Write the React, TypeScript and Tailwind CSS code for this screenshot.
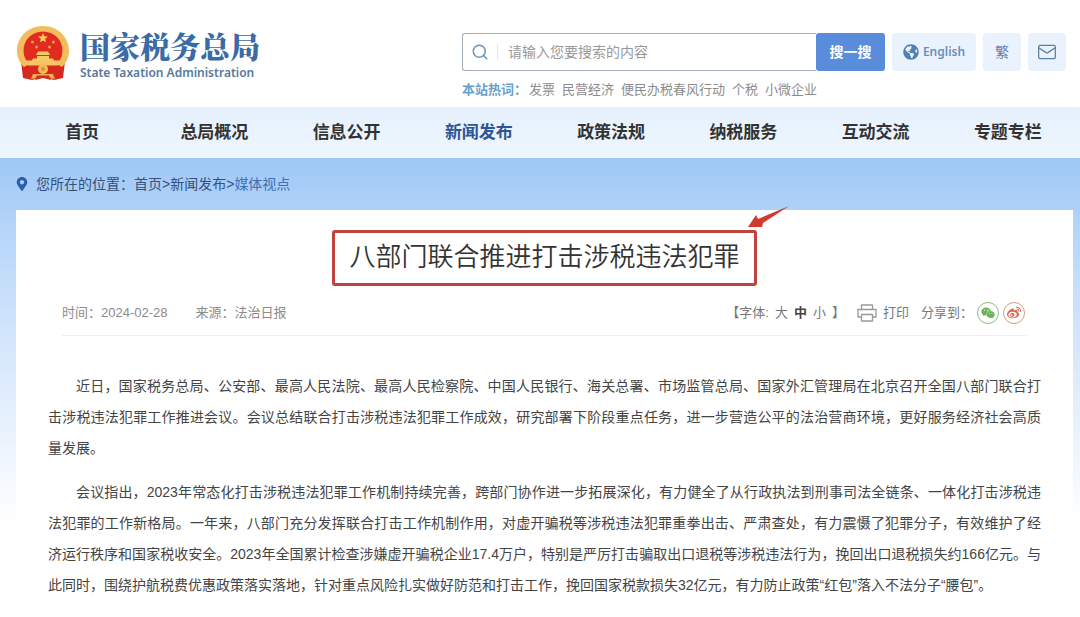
import type { ReactNode } from "react";
import { Mail, Search } from "lucide-react";
import { FaGlobeAmericas, FaMapMarkerAlt, FaWeibo, FaWeixin } from "react-icons/fa";

const navItems = ["首页", "总局概况", "信息公开", "新闻发布", "政策法规", "纳税服务", "互动交流", "专题专栏"];
const hotWords = ["发票", "民营经济", "便民办税春风行动", "个税", "小微企业"];

const paragraphs = [
  "近日，国家税务总局、公安部、最高人民法院、最高人民检察院、中国人民银行、海关总署、市场监管总局、国家外汇管理局在北京召开全国八部门联合打击涉税违法犯罪工作推进会议。会议总结联合打击涉税违法犯罪工作成效，研究部署下阶段重点任务，进一步营造公平的法治营商环境，更好服务经济社会高质量发展。",
  "会议指出，2023年常态化打击涉税违法犯罪工作机制持续完善，跨部门协作进一步拓展深化，有力健全了从行政执法到刑事司法全链条、一体化打击涉税违法犯罪的工作新格局。一年来，八部门充分发挥联合打击工作机制作用，对虚开骗税等涉税违法犯罪重拳出击、严肃查处，有力震慑了犯罪分子，有效维护了经济运行秩序和国家税收安全。2023年全国累计检查涉嫌虚开骗税企业17.4万户，特别是严厉打击骗取出口退税等涉税违法行为，挽回出口退税损失约166亿元。与此同时，围绕护航税费优惠政策落实落地，针对重点风险扎实做好防范和打击工作，挽回国家税款损失32亿元，有力防止政策“红包”落入不法分子“腰包”。",
];

function Emblem() {
  return (
    <svg viewBox="0 0 54 56" className="h-14 w-[54px] shrink-0" aria-hidden="true">
      <path d="M5 36L7 53l9 2 11-3 11 3 9-2 2-17z" fill="#d42a20" />
      <path d="M27 1C12 1 1 12 1 26c0 7 3 12 7 16l9-5h20l9 5c4-4 7-9 7-16C53 12 42 1 27 1z" fill="#f3bd5c" />
      <path d="M27 6.500C16 6.500 7.500 15 7.500 25.500c0 4 1.300 8 3.500 11h32c2.200-3 3.500-7 3.500-11C46.500 15 38 6.500 27 6.500z" fill="#e02c20" />
      <path d="M27 8l1.400 3.200 3.500.3-2.700 2.300.9 3.500L27 15.500l-3.100 1.800.9-3.500-2.700-2.300 3.500-.3z" fill="#f8cc58" />
      <g fill="#f29a48">
        <circle cx="16.500" cy="17" r="1.500" />
        <circle cx="20.500" cy="22" r="1.500" />
        <circle cx="33.500" cy="22" r="1.500" />
        <circle cx="37.500" cy="17" r="1.500" />
      </g>
      <path d="M22 26.500h10l2 3.500H20z M21 31h12v2.500h4l2 3.500H15l2-3.500h4z" fill="#f6cc66" />
      <path d="M8 35.500h38l-4 5H12z" fill="#f6c462" />
      <path d="M11 41q8 4 16 0 8 4 16 0l1 5q-8 4-12 1h-10q-4 3-12-1z" fill="#d9291f" />
      <circle cx="27" cy="44" r="5" fill="#f3bd5c" />
      <circle cx="27" cy="44" r="2" fill="#e58a35" />
      <path d="M17 49h20l2 5-12-2-12 2z" fill="#efae50" />
      <path d="M21 50.500l-2 4.500 8-2 8 2-2-4.500z" fill="#d42a20" />
    </svg>
  );
}

function PrinterIcon() {
  return (
    <svg viewBox="0 0 20 18" className="h-[18px] w-5" fill="none" stroke="#999" strokeWidth="1.300" strokeLinejoin="round" aria-hidden="true">
      <path d="M4.500 5.500V1h11v4.500" />
      <path d="M4.500 13H1V5.500h18V13h-3.500" />
      <path d="M4.500 10.500h11V17h-11z" />
    </svg>
  );
}

function ShareButton({ label, className, children }: { label: string; className: string; children: ReactNode }) {
  return (
    <button type="button" aria-label={label} className={`flex size-[22px] items-center justify-center rounded-full border ${className}`}>
      {children}
    </button>
  );
}

function Header() {
  return (
    <header className="flex h-[107px] items-start justify-between bg-white pr-3.5 pl-4">
      <a href="#" className="flex items-start gap-2.5 pt-[25px]">
        <Emblem />
        <span className="flex flex-col gap-1.5 pt-1.5">
          <span className="font-['Noto_Serif_CJK_SC','Noto_Sans_CJK_SC',serif] text-[30px] leading-7 font-black text-[#3a6ba5]">国家税务总局</span>
          <span className="font-['Noto_Sans','Noto_Sans_CJK_SC',sans-serif] text-[12px] leading-4 font-semibold text-[#55799c]">
            State Taxation Administration
          </span>
        </span>
      </a>
      <div className="pt-[33px]">
        <div className="flex gap-[7px]">
          <form className="flex" onSubmit={(e) => e.preventDefault()}>
            <label className="flex h-[38px] w-[354px] items-center rounded-l-[3px] border border-r-0 border-[#a3adb8] pl-2">
              <Search className="size-[18px] text-[#6d94b8]" strokeWidth={2} />
              <span className="mx-2 h-4 w-px bg-[#e2e6ea]" />
              <input
                type="search"
                aria-label="搜索"
                placeholder="请输入您要搜索的内容"
                className="min-w-0 flex-1 bg-transparent pl-0.5 text-[14px] outline-none placeholder:text-[#999]"
              />
            </label>
            <button type="submit" className="h-[38px] w-[69px] rounded-[3px] bg-[#5a8cdc] text-[14px] font-bold text-white">
              搜一搜
            </button>
          </form>
          <a href="#" className="flex h-[38px] w-[84px] items-center justify-center gap-1 rounded bg-[#eaf3fd] font-['Noto_Sans',sans-serif] text-[12px] font-semibold text-[#6a8fb8]">
            <FaGlobeAmericas className="size-4 text-[#4f82b3]" />
            English
          </a>
          <button type="button" className="h-[38px] w-[38px] rounded bg-[#eaf3fd] text-[14px] text-[#6380ab]">
            繁
          </button>
          <a href="#" aria-label="邮箱" className="flex size-[38px] items-center justify-center rounded bg-[#eaf3fd] text-[#5b7f9e]">
            <Mail className="size-5" strokeWidth={1.5} />
          </a>
        </div>
        <div className="mt-2 flex gap-0.5 text-[13px] leading-[22px] text-[#8c8c8c]">
          <span className="font-bold text-[#6aa0cc]">本站热词：</span>
          <span className="flex gap-[7px]">
            {hotWords.map((word) => (
              <a key={word} href="#">{word}</a>
            ))}
          </span>
        </div>
      </div>
    </header>
  );
}

export default function App() {
  return (
    <div className="min-h-screen bg-white font-['Liberation_Sans','Noto_Sans_CJK_SC',sans-serif] text-[#444]">
      <Header />
      <nav className="grid h-[51px] grid-cols-8 items-center bg-linear-to-b from-[#e6f1fd] to-[#eef6fe] pr-1.5 pl-4">
        {navItems.map((item) => (
          <a
            key={item}
            href="#"
            className={`text-center text-[17px] leading-6 font-bold ${item === "新闻发布" ? "text-[#2f5596]" : "text-[#333]"}`}
          >
            {item}
          </a>
        ))}
      </nav>
      <div className="bg-linear-to-b from-[#9fc8f6] via-[#c9e0fb] via-30% to-white to-80% pr-[7px] pl-4">
        <div className="flex h-[52px] items-center text-[14px] text-[#35507a]">
          <FaMapMarkerAlt className="mr-2 size-3.5 w-3 text-[#2b5cad]" />
          <span>您所在的位置：</span>
          <a href="#">首页</a>&gt;<a href="#">新闻发布</a>&gt;<a href="#" className="text-[#3f6fb4]">媒体视点</a>
        </div>
        <main className="bg-white px-[46px] pt-5 pb-4">
          <div className="flex justify-center">
            <div className="relative rounded-[3px] border-3 border-[#c0443e] px-3.5 pb-0.5">
              <h1 className="text-[26px] leading-[48px] font-[350] text-[#333]">八部门联合推进打击涉税违法犯罪</h1>
              <svg viewBox="0 0 42 22" className="absolute -top-[27px] -right-9 h-[22px] w-[42px]" aria-hidden="true">
                <path d="M41 0L15 17l-1 4L0 21 8 9l2 4z" fill="#d23a2e" />
              </svg>
            </div>
          </div>
          <div className="flex h-[50px] items-center justify-between border-b border-[#efefef] pt-1 text-[13px] text-[#8c8c8c]">
            <div className="flex gap-7">
              <span>时间：2024-02-28</span>
              <span>来源：法治日报</span>
            </div>
            <div className="flex items-center gap-3 pr-0.5 text-[#777]">
              <span className="flex gap-1.5">
                <span>【字体:</span>
                <button type="button">大</button>
                <button type="button" className="font-bold text-[#444]">中</button>
                <button type="button">小</button>
                <span>】</span>
              </span>
              <button type="button" className="flex items-center gap-1.5">
                <PrinterIcon />
                打印
              </button>
              <span className="flex items-center gap-1">
                <span>分享到：</span>
                <ShareButton label="微信" className="border-[#8fbc83] text-[#6cb256]">
                  <FaWeixin className="size-3.5" />
                </ShareButton>
                <ShareButton label="微博" className="border-[#d79a86] text-[#dc6a52]">
                  <FaWeibo className="size-3.5" />
                </ShareButton>
              </span>
            </div>
          </div>
          <article className="-mx-3.5 flex flex-col gap-[13px] pt-[35px] text-justify text-[14px] leading-[31px]">
            {paragraphs.map((text) => (
              <p key={text} className="indent-7">{text}</p>
            ))}
          </article>
        </main>
      </div>
    </div>
  );
}
